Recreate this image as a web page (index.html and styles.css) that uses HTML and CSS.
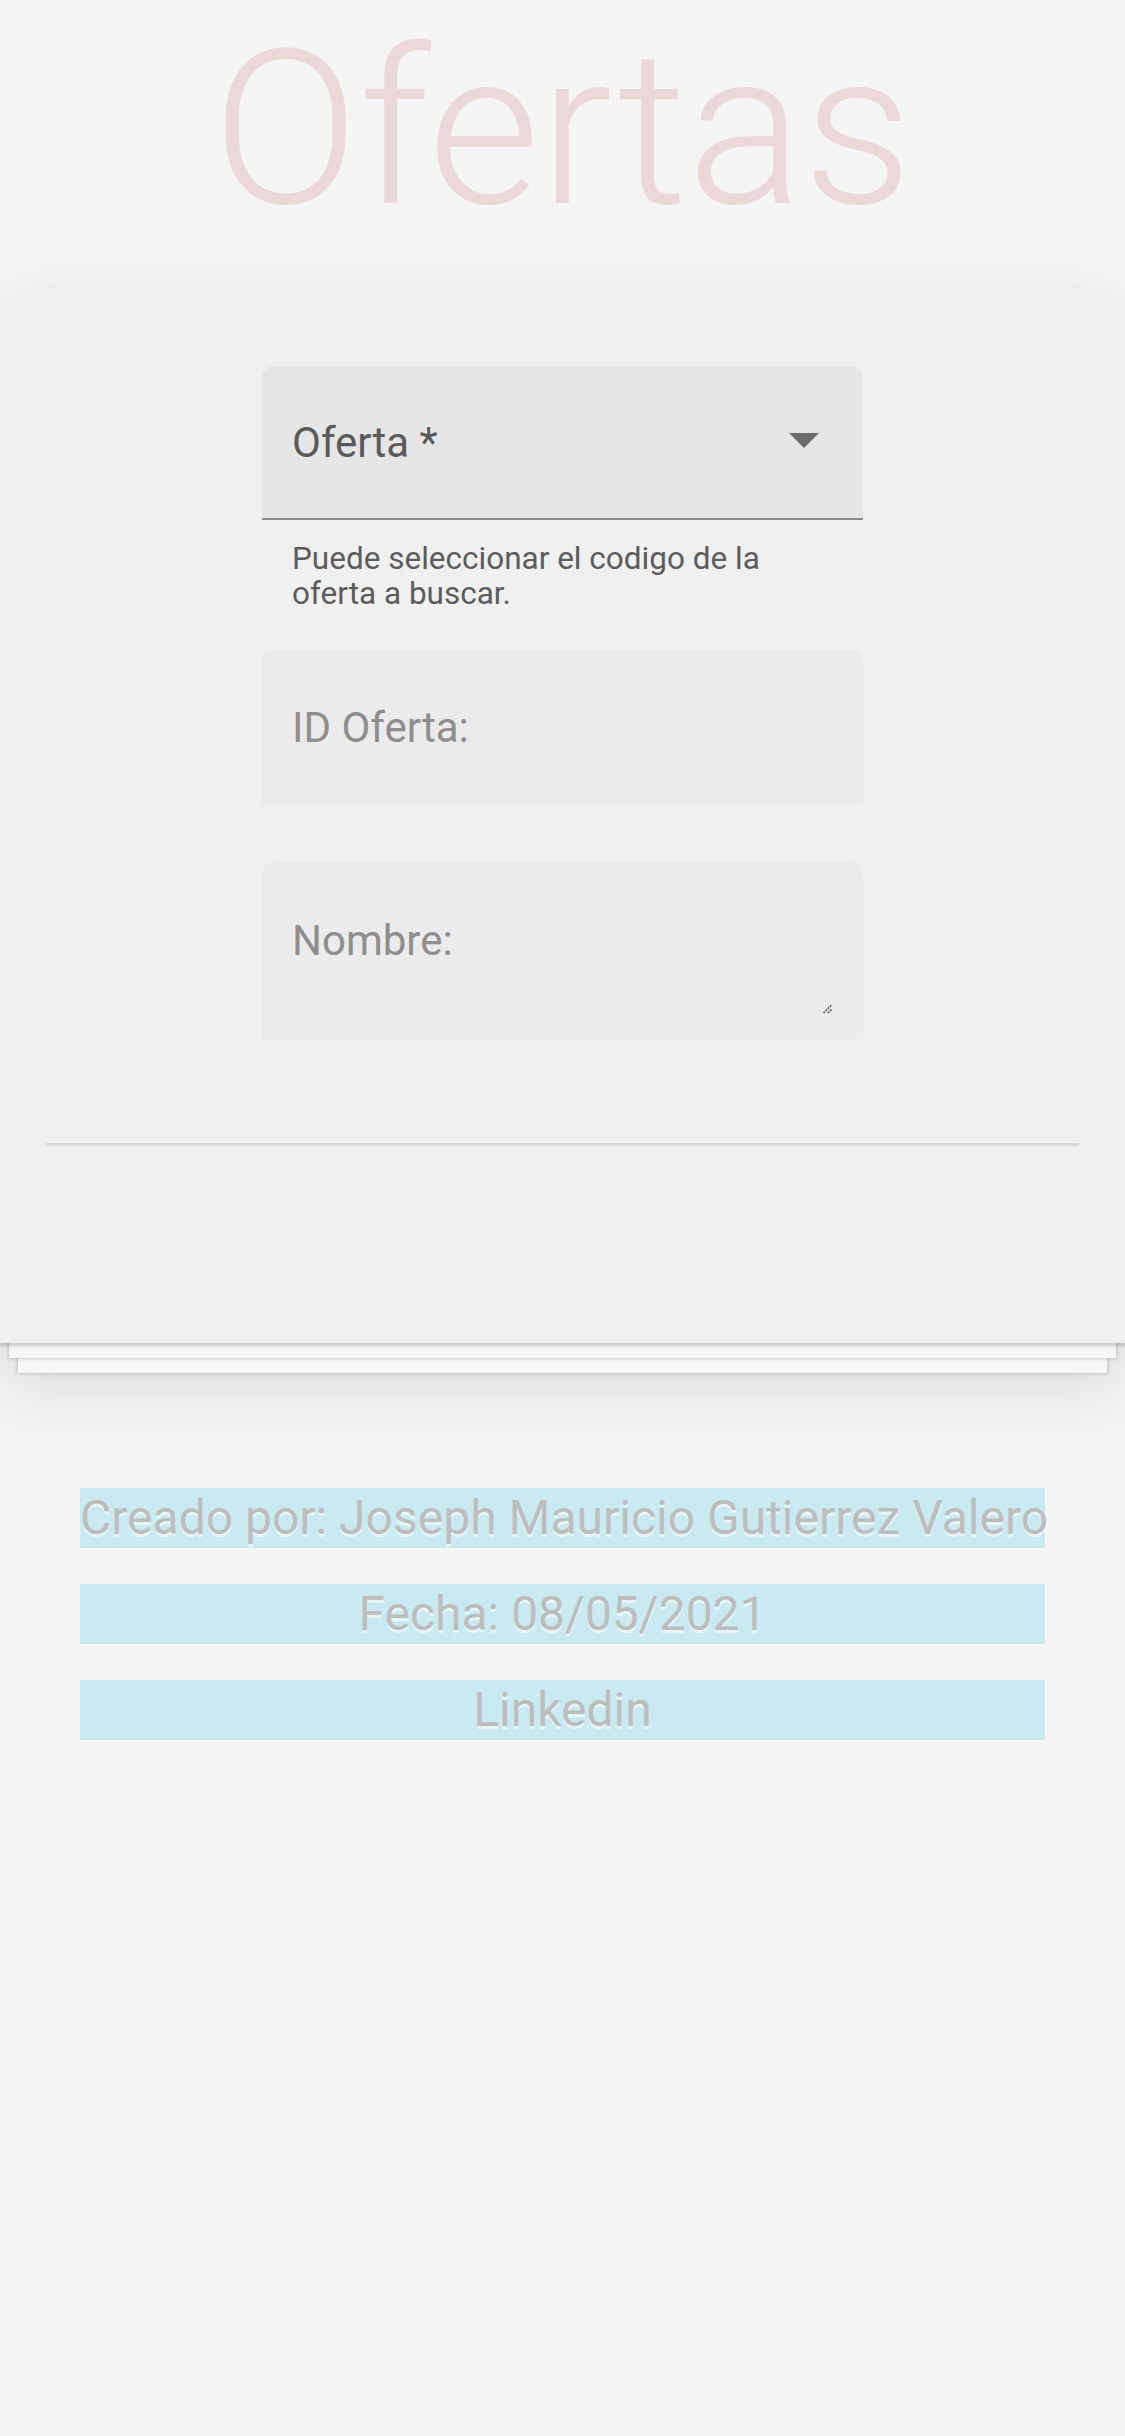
FILE: index.html
```html
<!DOCTYPE html>
<html lang="es">
<head>
<meta charset="utf-8">
<title>Ofertas</title>
<link rel="stylesheet" href="styles.css">
</head>
<body>
<header class="hero">
  <h1 class="hero-title">Ofertas</h1>
</header>
<main class="card">
  <form class="form">
    <div class="field field-select">
      <span class="field-label">Oferta *</span>
      <span class="select-arrow"></span>
    </div>
    <p class="hint">Puede seleccionar el codigo de la oferta a buscar.</p>
    <div class="field field-input">
      <span class="field-placeholder">ID Oferta:</span>
    </div>
    <div class="field field-textarea">
      <span class="field-placeholder">Nombre:</span>
      <svg class="grip" width="10" height="10" viewBox="0 0 10 10" aria-hidden="true">
        <line x1="0.5" y1="9" x2="9" y2="0.5" stroke="#555" stroke-width="1.6" stroke-dasharray="2 1"/>
        <line x1="5" y1="9" x2="9" y2="5" stroke="#555" stroke-width="1.6" stroke-dasharray="2 1"/>
      </svg>
    </div>
  </form>
  <hr class="divider">
</main>
<footer class="credits">
  <p class="credit">Creado por: Joseph Mauricio Gutierrez Valero</p>
  <p class="credit">Fecha: 08/05/2021</p>
  <p class="credit">Linkedin</p>
</footer>
</body>
</html>
```
FILE: styles.css
```css
html, body {
  margin: 0;
  padding: 0;
}
body {
  background: #f5f5f5;
  font-family: Roboto, "Noto Sans", "Liberation Sans", sans-serif;
  width: 1125px;
}
.hero {
  background: #f5f5f5;
  padding: 22px 0 56px;
  text-align: center;
}
.hero-title {
  margin: 0;
  font-family: Roboto, sans-serif;
  font-weight: 300;
  font-size: 216px;
  line-height: 216px;
  color: #ebd8d8;
}
.card {
  display: block;
  background: #f0f0f0;
  padding: 72px 0 197px;
  box-shadow:
    0 3px 3px rgba(0, 0, 0, 0.18),
    0 24px 0 -9px #f7f7f7,
    0 24px 3px -8px rgba(0, 0, 0, 0.16),
    0 48px 0 -18px #f7f7f7,
    0 48px 3px -17px rgba(0, 0, 0, 0.16),
    0 0 70px rgba(0, 0, 0, 0.05),
    0 50px 70px rgba(0, 0, 0, 0.09);
}
.form {
  width: 601px;
  margin: 0 auto;
}
.field {
  position: relative;
  box-sizing: border-box;
  display: flex;
  align-items: flex-start;
  border-radius: 12px 12px 0 0;
  padding: 0 44px 0 30px;
}
.field-select {
  height: 154px;
  padding-top: 53px;
  background: #e6e6e6;
  border-bottom: 2px solid #8a8a8a;
}
.field-input {
  height: 153px;
  padding-top: 54px;
  margin-top: 39px;
  background: #ebebeb;
}
.field-textarea {
  height: 177px;
  padding-top: 55px;
  margin-top: 59px;
  background: #ebebeb;
}
.field-label,
.field-placeholder {
  flex: 1;
  font-size: 42px;
  line-height: 48px;
}
.field-label {
  color: #5a5a5a;
}
.field-placeholder {
  color: #8e8e8e;
}
.select-arrow {
  width: 0;
  height: 0;
  margin-top: 14px;
  border-left: 15px solid transparent;
  border-right: 15px solid transparent;
  border-top: 15px solid #6b6b6b;
}
.hint {
  margin: 21px 0 0;
  padding: 0 30px;
  font-size: 31.5px;
  line-height: 35px;
  color: #5c5c5c;
}
.grip {
  position: absolute;
  left: 561px;
  top: 142px;
}
.divider {
  margin: 104px 46px 0;
  height: 3px;
  border: 0;
  background: #d9d9d9;
}
.credits {
  padding: 145px 0 0;
}
.credit {
  margin: 0 80px 36px;
  height: 60px;
  background: #c9eaf1;
  color: #bdbdbd;
  font-size: 48px;
  line-height: 60px;
  text-align: center;
  white-space: nowrap;
  text-shadow: 0 3px 0 rgba(255, 255, 255, 0.55);
}
```
